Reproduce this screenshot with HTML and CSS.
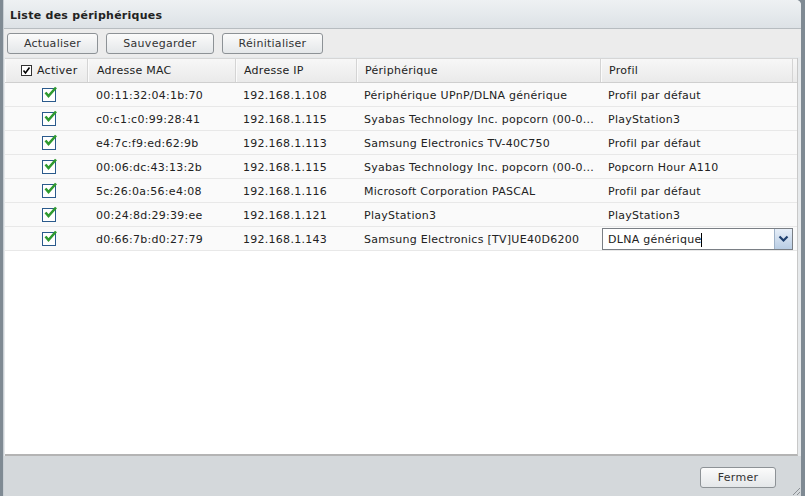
FILE: index.html
```html
<!DOCTYPE html>
<html lang="fr">
<head>
<meta charset="utf-8">
<title>Liste des périphériques</title>
<link rel="stylesheet" href="styles.css">
</head>
<body>
<div class="window">
  <div class="titlebar">Liste des périphériques</div>
  <div class="toolbar">
    <button class="btn btn-a">Actualiser</button>
    <button class="btn btn-s">Sauvegarder</button>
    <button class="btn btn-r">Réinitialiser</button>
  </div>
  <div class="grid">
    <div class="row head">
      <div class="c c1"><span class="hcheck"><svg width="9" height="9" viewBox="0 0 9 9"><path d="M1.5 4.5 L3.5 7 L7.5 1.5" fill="none" stroke="#000" stroke-width="1.6"/></svg></span>Activer</div>
      <div class="c c2">Adresse MAC</div>
      <div class="c c3">Adresse IP</div>
      <div class="c c4">Périphérique</div>
      <div class="c c5">Profil</div>
    </div>
    <div class="row">
      <div class="c c1 center"><span class="chk"><svg width="15" height="13" viewBox="0 0 15 13"><path d="M2.5 6.5 L5.5 10 L13 1.5" fill="none" stroke="#2f9a2f" stroke-width="2.6"/></svg></span></div>
      <div class="c c2">00:11:32:04:1b:70</div>
      <div class="c c3">192.168.1.108</div>
      <div class="c c4">Périphérique UPnP/DLNA générique</div>
      <div class="c c5">Profil par défaut</div>
    </div>
    <div class="row">
      <div class="c c1 center"><span class="chk"><svg width="15" height="13" viewBox="0 0 15 13"><path d="M2.5 6.5 L5.5 10 L13 1.5" fill="none" stroke="#2f9a2f" stroke-width="2.6"/></svg></span></div>
      <div class="c c2">c0:c1:c0:99:28:41</div>
      <div class="c c3">192.168.1.115</div>
      <div class="c c4">Syabas Technology Inc. popcorn (00-0...</div>
      <div class="c c5">PlayStation3</div>
    </div>
    <div class="row">
      <div class="c c1 center"><span class="chk"><svg width="15" height="13" viewBox="0 0 15 13"><path d="M2.5 6.5 L5.5 10 L13 1.5" fill="none" stroke="#2f9a2f" stroke-width="2.6"/></svg></span></div>
      <div class="c c2">e4:7c:f9:ed:62:9b</div>
      <div class="c c3">192.168.1.113</div>
      <div class="c c4">Samsung Electronics TV-40C750</div>
      <div class="c c5">Profil par défaut</div>
    </div>
    <div class="row">
      <div class="c c1 center"><span class="chk"><svg width="15" height="13" viewBox="0 0 15 13"><path d="M2.5 6.5 L5.5 10 L13 1.5" fill="none" stroke="#2f9a2f" stroke-width="2.6"/></svg></span></div>
      <div class="c c2">00:06:dc:43:13:2b</div>
      <div class="c c3">192.168.1.115</div>
      <div class="c c4">Syabas Technology Inc. popcorn (00-0...</div>
      <div class="c c5">Popcorn Hour A110</div>
    </div>
    <div class="row">
      <div class="c c1 center"><span class="chk"><svg width="15" height="13" viewBox="0 0 15 13"><path d="M2.5 6.5 L5.5 10 L13 1.5" fill="none" stroke="#2f9a2f" stroke-width="2.6"/></svg></span></div>
      <div class="c c2">5c:26:0a:56:e4:08</div>
      <div class="c c3">192.168.1.116</div>
      <div class="c c4">Microsoft Corporation PASCAL</div>
      <div class="c c5">Profil par défaut</div>
    </div>
    <div class="row">
      <div class="c c1 center"><span class="chk"><svg width="15" height="13" viewBox="0 0 15 13"><path d="M2.5 6.5 L5.5 10 L13 1.5" fill="none" stroke="#2f9a2f" stroke-width="2.6"/></svg></span></div>
      <div class="c c2">00:24:8d:29:39:ee</div>
      <div class="c c3">192.168.1.121</div>
      <div class="c c4">PlayStation3</div>
      <div class="c c5">PlayStation3</div>
    </div>
    <div class="row last">
      <div class="c c1 center"><span class="chk"><svg width="15" height="13" viewBox="0 0 15 13"><path d="M2.5 6.5 L5.5 10 L13 1.5" fill="none" stroke="#2f9a2f" stroke-width="2.6"/></svg></span></div>
      <div class="c c2">d0:66:7b:d0:27:79</div>
      <div class="c c3">192.168.1.143</div>
      <div class="c c4">Samsung Electronics [TV]UE40D6200</div>
      <div class="c c5 editing">
        <div class="combo">
          <span class="combo-text">DLNA générique<span class="caret"></span></span>
          <span class="combo-btn"><svg width="11" height="8" viewBox="0 0 11 8"><path d="M1.5 1.5 L5.5 5.5 L9.5 1.5" fill="none" stroke="#1e3f6e" stroke-width="2.2"/></svg></span>
        </div>
      </div>
    </div>
  </div>
  <div class="footer">
    <button class="btn btn-f">Fermer</button>
    <span class="grip"><svg width="10" height="10" viewBox="0 0 10 10"><path d="M9 2 L2 9 M9 6 L6 9" stroke="#8a8f94" stroke-width="1"/></svg></span>
  </div>
</div>
</body>
</html>
```

FILE: styles.css
```css
html, body {
  margin: 0;
  padding: 0;
}
body {
  width: 805px;
  height: 496px;
  overflow: hidden;
  background: #7f8a93;
  font-family: "DejaVu Sans", Verdana, sans-serif;
  font-size: 11px;
  letter-spacing: 0.27px;
  color: #222;
}
.window {
  margin-left: 3px;
  width: 798px;
  height: 496px;
  display: flex;
  flex-direction: column;
  background: #e6e9eb;
  border-top-right-radius: 5px;
  border-left: 1px solid #c9cfd4;
  box-sizing: border-box;
}
.titlebar {
  height: 29px;
  box-sizing: border-box;
  padding-left: 6px;
  padding-top: 3px;
  display: flex;
  align-items: center;
  font-weight: bold;
  font-size: 11px;
  color: #222;
  background: linear-gradient(#eef1f3, #dde2e6);
  border-bottom: 1px solid #b7bcc0;
  border-top-right-radius: 5px;
}
.toolbar {
  height: 28px;
  box-sizing: border-box;
  background: #ececec;
  display: flex;
  align-items: center;
  padding-left: 3px;
  gap: 8px;
}
.btn {
  font-family: "DejaVu Sans", Verdana, sans-serif;
  font-size: 11px;
  letter-spacing: 0.27px;
  color: #333;
  height: 21px;
  padding: 0;
  border: 1px solid #8d9296;
  border-radius: 3px;
  background: linear-gradient(#fbfbfb, #e4e7e9);
  box-sizing: border-box;
}
.btn-a { width: 91px; }
.btn-s { width: 108px; }
.btn-r { width: 101px; }
.grid {
  flex: 1;
  margin-top: 1px;
  margin-left: 1px;
  margin-right: 3px;
  background: #fff;
  border-right: 1px solid #c8c8c8;
  border-bottom: 2px solid #b4b4b4;
}
.row {
  display: flex;
  height: 24px;
  box-sizing: border-box;
  padding-top: 1px;
  border-bottom: 1px solid #e8e8e8;
  background: #fafafa;
}
.row.head {
  height: 25px;
  padding-top: 0;
  background: linear-gradient(#f7f7f7, #eaeaea);
  border-top: 1px solid #d6d6d6;
  border-bottom: 1px solid #cfcfcf;
}
.row.last {
  padding-top: 0;
}
.c {
  display: flex;
  align-items: center;
  padding-left: 7px;
  box-sizing: border-box;
  white-space: nowrap;
  overflow: hidden;
}
.head .c {
  border-right: 1px solid #d4d4d4;
  border-left: 1px solid #fbfbfb;
}
.last .c:not(.editing) {
  padding-top: 1px;
}
.c1 { width: 83px; padding-left: 15px; }
.c2 { width: 148px; padding-left: 8px; }
.c3 { width: 121px; }
.c4 { width: 244px; }
.c5 { width: 192px; }
.c.center {
  justify-content: center;
  padding-left: 4px;
}
.hcheck {
  width: 9px;
  height: 9px;
  border: 1px solid #333;
  background: #fff;
  margin-right: 5px;
  display: flex;
  align-items: center;
  justify-content: center;
}
.chk {
  width: 12px;
  height: 12px;
  border: 1px solid #2a5a8c;
  background: #fff;
  position: relative;
  display: block;
}
.chk svg {
  position: absolute;
  left: 0;
  top: -3px;
}
.editing {
  padding-left: 1px;
  align-items: stretch;
  padding-top: 1px;
}
.combo {
  flex: 1;
  display: flex;
  border: 1px solid #7a7f85;
  background: #fff;
}
.combo-text {
  flex: 1;
  display: flex;
  align-items: center;
  padding-left: 5px;
  padding-top: 1px;
}
.caret {
  display: inline-block;
  width: 1px;
  height: 14px;
  background: #000;
}
.combo-btn {
  width: 17px;
  border-left: 1px solid #9fb2c8;
  background: linear-gradient(#e6eef8, #b9cde4);
  display: flex;
  align-items: center;
  justify-content: center;
}
.footer {
  height: 40px;
  box-sizing: border-box;
  background: #d4d8db;
  display: flex;
  align-items: center;
  justify-content: flex-end;
  padding-right: 25px;
  padding-top: 3px;
  position: relative;
}
.btn-f { width: 76px; }
.grip {
  position: absolute;
  right: 0;
  bottom: 0;
  width: 10px;
  height: 10px;
}
```
